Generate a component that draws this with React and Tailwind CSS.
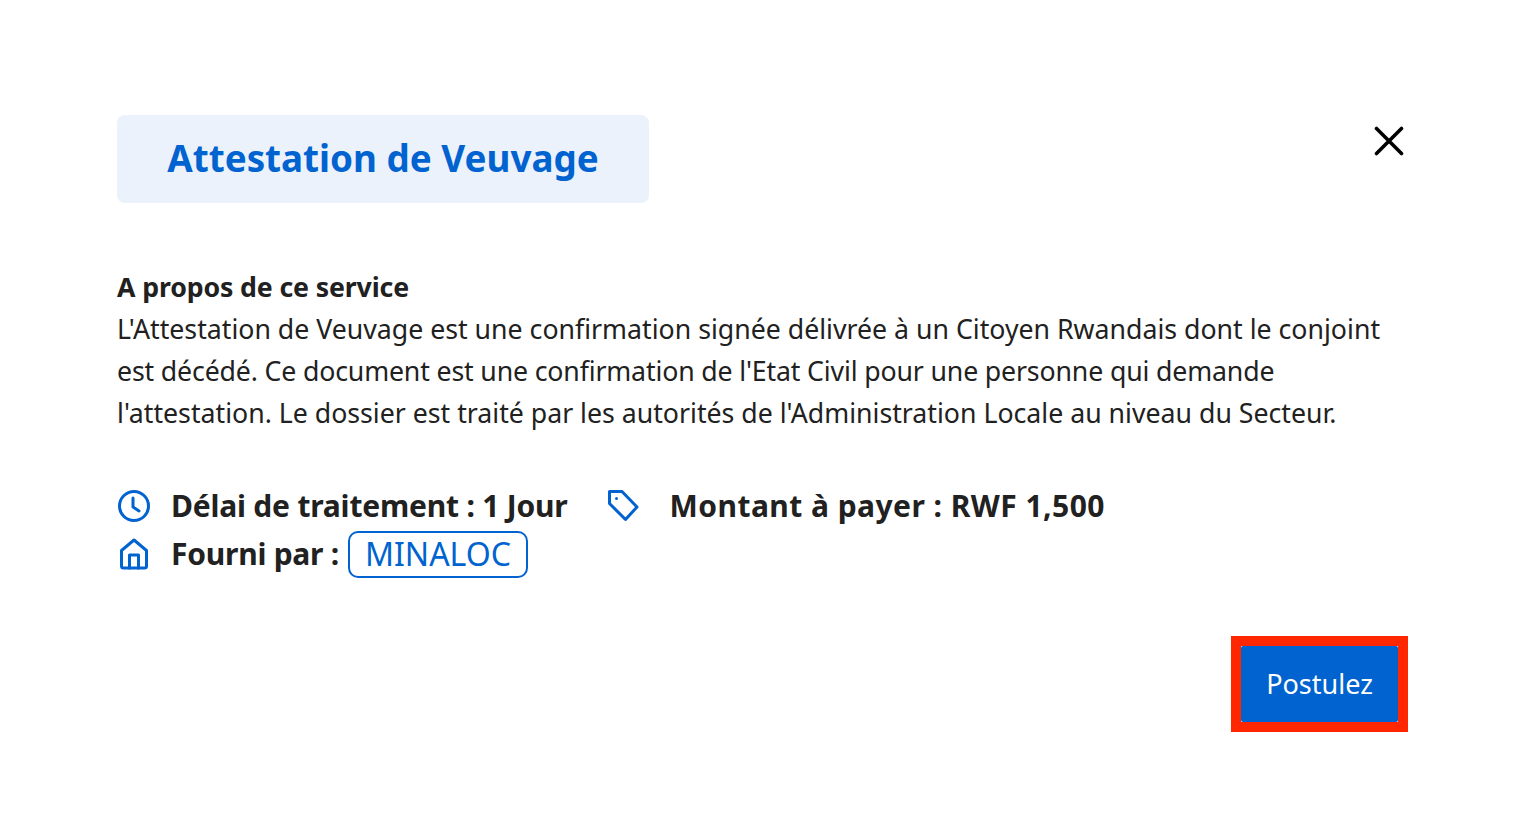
const BLUE = 'text-[#0063cf]';

export default function App() {
  return (
    <main className="min-h-screen bg-white pl-[117px] pr-[109px] pt-[115px] text-[#212121] font-['Noto_Sans',sans-serif]">
      {/* Header */}
      <div className="flex items-start justify-between">
        <h1 className={`flex h-[88px] w-[532px] items-center justify-center rounded-lg bg-[#ebf2fc] pb-[1px] text-[36.8px] font-bold ${BLUE}`}>
          Attestation de Veuvage
        </h1>
        <button className="mt-[11px] mr-[4px] text-black">
          <svg className="h-[30px] w-[30px]" viewBox="0 0 30 30" fill="none" stroke="currentColor" strokeWidth="3.6" strokeLinecap="round">
            <path d="M2.5 2.5l25 25M27.5 2.5l-25 25" />
          </svg>
        </button>
      </div>

      {/* Description */}
      <div className="mt-[63px] text-[26.7px] leading-[42px]">
        <p className="font-bold tracking-[-0.13px]">A propos de ce service</p>
        <p>
          L'Attestation de Veuvage est une confirmation signée délivrée à un Citoyen Rwandais dont le conjoint
          <br />
          <span className="tracking-[-0.15px]">est décédé. Ce document est une confirmation de l'Etat Civil pour une personne qui demande</span>
          <br />
          l'attestation. Le dossier est traité par les autorités de l'Administration Locale au niveau du Secteur.
        </p>
      </div>

      {/* Details */}
      <div className="mt-[47px] flex flex-col text-[30px] font-bold">
        <div className="flex h-[48px] items-center">
          <svg className={`mt-[2px] h-[34px] w-[34px] ${BLUE}`} viewBox="0 0 34 34" fill="none" stroke="currentColor" strokeWidth="3" strokeLinecap="round" strokeLinejoin="round">
            <circle cx="17" cy="17" r="14.5" />
            <path d="M16 9v9l6 4" />
          </svg>
          <span className="ml-[20px] tracking-[-0.2px]">Délai de traitement : 1 Jour</span>
          <svg className={`mt-[2px] ml-[39px] h-[34px] w-[34px] ${BLUE}`} viewBox="0 0 34 34" fill="none" stroke="currentColor" strokeWidth="3" strokeLinejoin="round">
            <path d="M2.5 2.5h12.5l15 15.5L18.500 30.500 2.500 14.500z" />
            <circle cx="9.500" cy="9.500" r="1.500" fill="currentColor" stroke="none" />
          </svg>
          <span className="ml-[29px] tracking-[0.45px]">Montant à payer : RWF 1,500</span>
        </div>
        <div className="flex h-[48px] items-center">
          <svg className={`mt-[2px] h-[34px] w-[34px] ${BLUE}`} viewBox="0 0 34 34" fill="none" stroke="currentColor" strokeWidth="3" strokeLinecap="round" strokeLinejoin="round">
            <path d="M4.500 13.500 17 3l12.500 10.500V29a2 2 0 0 1-2 2h-21a2 2 0 0 1-2-2z" />
            <path d="M12.500 31V18h9v13" />
          </svg>
          <span className="ml-[20px] tracking-[-0.25px]">Fourni par :</span>
          <span className={`mt-[2px] ml-[9px] flex h-[47px] w-[180px] items-center justify-center rounded-[10px] border-2 border-[#0063cf] text-[32px] font-normal ${BLUE}`}>
            MINALOC
          </span>
        </div>
      </div>

      {/* Action */}
      <div className="mt-[59px] flex justify-end">
        <div className="border-[10px] border-[#ff2600] bg-white">
          <button className="flex h-[76px] w-[157px] items-center justify-center rounded-[2px] bg-[#0063cf] text-[27px] text-white">
            Postulez
          </button>
        </div>
      </div>
    </main>
  );
}
